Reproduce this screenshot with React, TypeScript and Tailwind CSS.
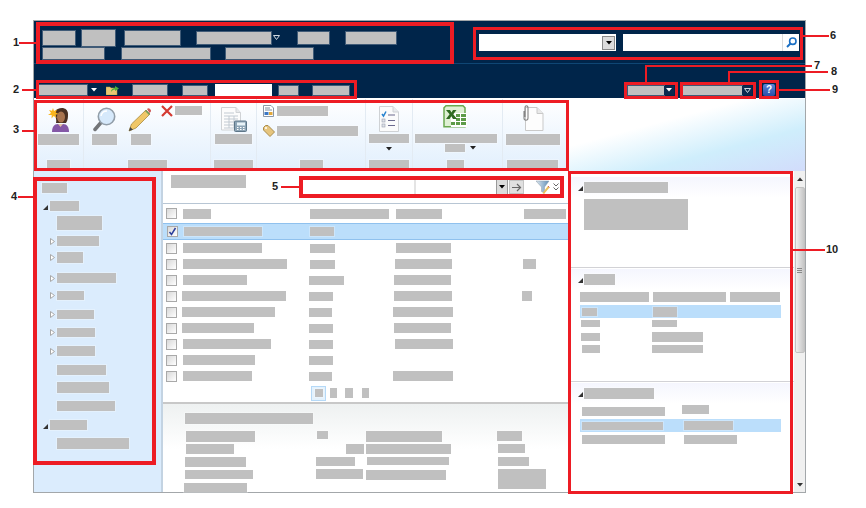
import type { ReactNode } from "react";

const Blk = ({ className = "" }: { className?: string }) => (
  <div className={`shrink-0 bg-[#c0c0c0] shadow-[0_0_0_1px_rgba(255,255,255,0.25)] ${className}`} />
);

const Caret = ({ className = "" }: { className?: string }) => (
  <svg width="6" height="4" viewBox="0 0 6 4" className={`shrink-0 ${className}`}>
    <path d="M0 0h6L3 3.5z" fill="currentColor" />
  </svg>
);

const HollowCaret = ({ className = "" }: { className?: string }) => (
  <svg width="7" height="5" viewBox="0 0 7 5" className={`shrink-0 ${className}`}>
    <path d="M.5.500h6L3.500 4.500z" fill="none" stroke="currentColor" />
  </svg>
);

const Expanded = ({ className = "" }: { className?: string }) => (
  <svg width="5" height="5" viewBox="0 0 5 5" className={`shrink-0 ${className}`}>
    <path d="M5 0v5H0z" fill="#333" />
  </svg>
);

const Collapsed = () => (
  <svg width="5" height="7" viewBox="0 0 5 7" className="shrink-0">
    <path d="M.5.500l4 3-4 3z" fill="#fff" stroke="#a8a8a8" />
  </svg>
);

const Check = ({ on = false }: { on?: boolean }) => (
  <div className="flex h-[11px] w-[11px] shrink-0 items-center justify-center border border-[#a9a9a9] bg-gradient-to-br from-[#d8d8d8] to-white">
    {on && (
      <svg width="9" height="9" viewBox="0 0 9 9">
        <path d="M1.500 5l2 2.500L7.500 1" fill="none" stroke="#2a3f9d" strokeWidth="1.500" />
      </svg>
    )}
  </div>
);

function UserIcon() {
  return (
    <svg width="24" height="25" viewBox="0 0 24 25">
      <path d="M5 25c0-5 2-8 6-8h5c4 0 6 3 6 8z" fill="#8458a6" />
      <path d="M11 17l2.500 3 2.500-3z" fill="#e3c3a6" />
      <path d="M8 5c1-3 4-4 7-4s6 2 6 6c0 3 0 6-2 9H9c1-3-1-7-1-11z" fill="#4a3122" />
      <ellipse cx="14" cy="10" rx="4" ry="5.500" fill="#a9744e" />
      <path d="M6 1l1 3 3-1.500L8.700 5.500 11.500 7 8.500 7.800 9.500 11 6.700 9 4.500 11.500 4.700 8 1 8l3-2L2 3l3 .7z" fill="#f9b51e" />
    </svg>
  );
}

function MagnifierIcon() {
  return (
    <svg width="23" height="25" viewBox="0 0 23 25">
      <path d="M8 15.500L2 22.500" stroke="#737578" strokeWidth="3.500" strokeLinecap="round" />
      <circle cx="13.500" cy="9.500" r="8.200" fill="#d6e9fb" stroke="#929ea9" strokeWidth="1.600" />
      <path d="M8 9c.5-3 3-5 6-5" stroke="#fff" strokeWidth="1.500" fill="none" />
    </svg>
  );
}

function PencilIcon() {
  return (
    <svg width="25" height="25" viewBox="0 0 25 25">
      <path d="M1 24l2.500-7L18 3l4 4L8 21z" fill="#f0c768" stroke="#a88a3e" strokeWidth=".8" />
      <path d="M1 24l1.200-4 2.800 2.800z" fill="#444" />
      <path d="M19 2c1-1 2-1 3 0s1.500 2 .5 3l-1 1z" fill="#cf5b58" />
      <path d="M17.500 3.500l4 4" stroke="#6e9e5e" strokeWidth="1.500" />
    </svg>
  );
}

function CrossIcon() {
  return (
    <svg width="12" height="12" viewBox="0 0 12 12">
      <path d="M1 1l10 10M11 1L1 11" stroke="#d43a32" strokeWidth="2.200" />
    </svg>
  );
}

function PhoneDocIcon() {
  return (
    <svg width="26" height="25" viewBox="0 0 26 25">
      <path d="M.5.500H15l4.500 5V23H.5z" fill="#fcfcfc" stroke="#d0d3d6" />
      <path d="M15 .5v5h4.500" fill="#e8eaec" stroke="#d0d3d6" />
      <path d="M3 6h10M3 9h14M3 12h14M3 15h14M3 18h14M3 21h14M8 9v12M13 9v12" stroke="#c2cad2" />
      <rect x="13.500" y="14" width="12" height="10.500" rx="1" fill="#8ea5b6" stroke="#5d7688" />
      <rect x="16" y="15.500" width="8" height="3" fill="#e8f3f8" />
      <path d="M16 20.500h1.500M19 20.500h1.500M22 20.500h1.500M16 22.500h1.500M19 22.500h1.500M22 22.500h1.500" stroke="#fff" />
    </svg>
  );
}

function SmallDocIcon() {
  return (
    <svg width="11" height="12" viewBox="0 0 11 12">
      <path d="M.5.500H8L10.500 3v8.500H.5z" fill="#fff" stroke="#8b97a5" />
      <path d="M2 3h5M2 5h7" stroke="#7e8ea0" />
      <rect x="1.500" y="7" width="4" height="3" fill="#3a76c4" />
      <rect x="6" y="7" width="3.500" height="3" fill="#e2a83a" />
    </svg>
  );
}

function TagIcon() {
  return (
    <svg width="12" height="12" viewBox="0 0 12 12">
      <path d="M.5 2.500L2.500.5h2.500l6.500 6.500L7 11.500.5 5z" fill="#e6c57e" stroke="#a98c4c" />
      <circle cx="3" cy="3" r="1" fill="#fff" />
    </svg>
  );
}

function ChecklistIcon() {
  return (
    <svg width="20" height="26" viewBox="0 0 20 26">
      <path d="M.5.500H14l5.500 5.500v19.500H.5z" fill="#fbfbfb" stroke="#cfd2d5" />
      <path d="M14 .5V6h5.500" fill="#e9ebed" stroke="#cfd2d5" />
      <path d="M3 8l1.500 2L7 5.500" fill="none" stroke="#2682cf" strokeWidth="1.500" />
      <rect x="3" y="13" width="3" height="3" fill="#dfe3e8" stroke="#9a9fb0" strokeWidth=".6" />
      <rect x="3" y="18" width="3" height="3" fill="#dfe3e8" stroke="#9a9fb0" strokeWidth=".6" />
      <path d="M9 9h7M9 14.500h7M9 19.500h7" stroke="#6c6a8e" strokeWidth="1.200" />
    </svg>
  );
}

function ExcelIcon() {
  return (
    <svg width="25" height="25" viewBox="0 0 25 25">
      <path d="M3 .8h17l2 2v19H1V2.800z" fill="#dff0d4" stroke="#6aa84f" strokeWidth="1.500" />
      <rect x="8" y="8" width="16" height="14" fill="#fff" />
      <path d="M13 9h4v3h-4zM18 9h5v3h-5zM13 13h4v3h-4zM18 13h5v3h-5zM8 17h4v3H8zM13 17h4v3h-4zM18 17h5v3h-5z" fill="#5d9b48" />
      <path d="M3 5h4l1.500 2.500L10 5h3.500l-3.200 4.300L14 14h-4l-1.700-2.700L6.500 14H3l3.600-4.700z" fill="#2f6b21" />
    </svg>
  );
}

function AttachDocIcon() {
  return (
    <svg width="22" height="26" viewBox="0 0 22 26">
      <path d="M3.500 2.500H15l6 6v17H3.500z" fill="#fdfdfd" stroke="#c9c9c9" />
      <path d="M15 2.500v6h6" fill="#e9e9e9" stroke="#c9c9c9" />
      <path d="M2 6v7c0 3 4 3 4 0V3C6 0 3 0 3 3v9" fill="none" stroke="#848484" strokeWidth="1.100" />
    </svg>
  );
}

function FolderIcon() {
  return (
    <svg width="13" height="10" viewBox="0 0 13 10" className="shrink-0">
      <path d="M0 2h4l1 1h6v7H0z" fill="#e9c872" stroke="#b5943e" strokeWidth=".5" />
      <path d="M5 7c0-3 2-4 4-4V1l4 2.500L9 6V4.500C7 4.500 6 5.500 5 7z" fill="#4aae3a" />
    </svg>
  );
}

function SearchIcon() {
  return (
    <svg width="11" height="11" viewBox="0 0 11 11">
      <circle cx="6.800" cy="4.200" r="3.200" fill="none" stroke="#1a6fc4" strokeWidth="1.600" />
      <path d="M4.500 6.500L1 10" stroke="#1a6fc4" strokeWidth="2" />
    </svg>
  );
}

function FilterIcon() {
  return (
    <svg width="14" height="14" viewBox="0 0 14 14">
      <defs>
        <linearGradient id="funnel" x1="0" x2="1" y1="0" y2="0">
          <stop offset="0" stopColor="#dfe8f0" />
          <stop offset="1" stopColor="#5f8fb8" />
        </linearGradient>
      </defs>
      <path d="M0 1h13L8.500 7v6l-3-1.500V7z" fill="url(#funnel)" stroke="#8a9aa8" strokeWidth=".5" />
      <path d="M6.500 13l5.500-7 1.500 1.500L8 14z" fill="#eac25c" />
      <path d="M12 6l1.500 1.500" stroke="#d0605a" />
    </svg>
  );
}

function ArrowIcon() {
  return (
    <svg width="10" height="9" viewBox="0 0 10 9">
      <path d="M0 4.500h8M5 1l3.500 3.500L5 8" fill="none" stroke="#666" strokeWidth="1.200" />
    </svg>
  );
}

function DoubleChevron() {
  return (
    <svg width="6" height="8" viewBox="0 0 6 8">
      <path d="M.5.500L3 3 5.500.5M.5 4.500L3 7l2.500-2.500" fill="none" stroke="#666" />
    </svg>
  );
}

function Group({ className, foot, children }: { className: string; foot: string; children: ReactNode }) {
  return (
    <div className={`flex h-full shrink-0 flex-col border-r border-[#e3ebf3] ${className}`}>
      <div className="h-[61px]">{children}</div>
      <Blk className={`mx-auto h-[8px] ${foot}`} />
    </div>
  );
}

const treeRows = [
  { kids: false, w: "w-[45px]", h: "h-[14px]", mt: "mt-[5px]" },
  { kids: true, w: "w-[42px]", h: "h-[10px]", mt: "mt-[6px]" },
  { kids: true, w: "w-[26px]", h: "h-[11px]", mt: "mt-[6px]" },
  { kids: true, w: "w-[59px]", h: "h-[10px]", mt: "mt-[10px]" },
  { kids: true, w: "w-[27px]", h: "h-[9px]", mt: "mt-[8px]" },
  { kids: true, w: "w-[37px]", h: "h-[9px]", mt: "mt-[10px]" },
  { kids: true, w: "w-[38px]", h: "h-[9px]", mt: "mt-[9px]" },
  { kids: true, w: "w-[38px]", h: "h-[10px]", mt: "mt-[9px]" },
  { kids: false, w: "w-[49px]", h: "h-[10px]", mt: "mt-[9px]" },
  { kids: false, w: "w-[52px]", h: "h-[11px]", mt: "mt-[7px]" },
  { kids: false, w: "w-[58px]", h: "h-[10px]", mt: "mt-[8px]" },
];

const gridRows = [
  { c1: "w-[79px]", c2: "w-[25px]", c3: "w-[55px] ml-[2px]", c4: "" },
  { c1: "w-[104px]", c2: "w-[25px]", c3: "w-[57px] ml-[1px]", c4: "w-[13px]" },
  { c1: "w-[64px]", c2: "w-[35px] -ml-[1px]", c3: "w-[57px]", c4: "" },
  { c1: "w-[104px] -ml-[1px]", c2: "w-[24px] -ml-[1px]", c3: "w-[58px]", c4: "w-[10px] -ml-[1px]" },
  { c1: "w-[93px] -ml-[1px]", c2: "w-[23px] -ml-[1px]", c3: "w-[60px] -ml-[1px]", c4: "" },
  { c1: "w-[72px] -ml-[1px]", c2: "w-[24px] -ml-[1px]", c3: "w-[57px]", c4: "" },
  { c1: "w-[88px]", c2: "w-[24px] -ml-[1px]", c3: "w-[58px] ml-[1px]", c4: "" },
  { c1: "w-[72px]", c2: "w-[24px] -ml-[1px]", c3: "", c4: "" },
  { c1: "w-[69px]", c2: "w-[23px] -ml-[1px]", c3: "w-[60px] -ml-[1px]", c4: "" },
];

function SectionHead({ w }: { w: string }) {
  return (
    <div className="flex h-[21px] items-center gap-[1px] bg-gradient-to-b from-[#f5f6fe] to-white pl-[9px]">
      <Expanded className="mt-[1px]" />
      <Blk className={`h-[11px] ${w}`} />
    </div>
  );
}

export default function App() {
  return (
    <div className="relative h-[508px] w-[866px] overflow-hidden bg-white pl-[33px] pt-[20px] font-['Liberation_Sans',sans-serif]">
      <div className="flex h-[473px] w-[773px] flex-col border border-[#a3a7aa]">
        {/* top bar */}
        <div className="h-[78px] shrink-0 border-b border-white bg-[#00254a]">
          <div className="flex h-[43px] justify-between border-b border-[#0f4674]">
            <div className="pl-[9px]">
              <div className="flex h-[27px] items-center pt-[6px]">
                <Blk className="h-[14px] w-[32px]" />
                <Blk className="ml-[7px] h-[16px] w-[33px]" />
                <Blk className="ml-[10px] h-[14px] w-[55px]" />
                <Blk className="ml-[17px] h-[12px] w-[74px]" />
                <HollowCaret className="ml-[2px] text-[#cfd8e0]" />
                <Blk className="ml-[18px] h-[12px] w-[31px]" />
                <Blk className="ml-[17px] h-[12px] w-[50px]" />
              </div>
              <div className="flex items-center">
                <Blk className="h-[11px] w-[61px]" />
                <Blk className="ml-[18px] h-[11px] w-[88px]" />
                <Blk className="ml-[16px] h-[11px] w-[87px]" />
              </div>
            </div>
            <div className="flex items-start pr-[6px] pt-[13px]">
              <div className="flex h-[17px] w-[137px] items-center justify-end bg-white pr-[1px]">
                <div className="flex h-[14px] w-[13px] items-center justify-center border border-[#8a8a8a] bg-[#dcdcdc] text-black">
                  <Caret />
                </div>
              </div>
              <div className="ml-[7px] flex h-[17px] w-[176px] items-center justify-end bg-white">
                <div className="flex h-full w-[17px] items-center justify-center border-l border-[#dcdcdc]">
                  <SearchIcon />
                </div>
              </div>
            </div>
          </div>
          <div className="relative flex h-[34px] items-start justify-between pt-[20px] text-white">
            <div className="flex items-center pl-[5px]">
              <Blk className="h-[10px] w-[48px]" />
              <Caret className="ml-[4px]" />
              <div className="ml-[9px]">
                <FolderIcon />
              </div>
              <Blk className="ml-[14px] h-[10px] w-[34px]" />
              <Blk className="ml-[16px] h-[9px] w-[24px]" />
              <div className="ml-[8px] h-[12px] w-[57px] bg-white" />
              <Blk className="ml-[7px] h-[9px] w-[19px]" />
              <Blk className="ml-[15px] h-[9px] w-[36px]" />
            </div>
            <div className="flex items-center pr-[30px]">
              <Blk className="h-[9px] w-[36px]" />
              <div className="flex h-[9px] w-[10px] items-center justify-center bg-[#0c2a4f]">
                <Caret />
              </div>
              <Blk className="ml-[9px] h-[9px] w-[59px]" />
              <div className="flex h-[9px] w-[10px] items-center justify-center bg-[#0c2a4f]">
                <HollowCaret className="text-[#cfd8e0]" />
              </div>
              <div className="ml-[11px] flex h-[12px] w-[12px] items-center justify-center rounded-[2px] bg-gradient-to-b from-[#5d83d8] to-[#2a4fa8] text-[10px] font-bold leading-none text-white">
                ?
              </div>
            </div>
          </div>
        </div>

        {/* ribbon */}
        <div className="flex h-[72px] shrink-0">
          <div className="flex h-full w-[535px] shrink-0 bg-gradient-to-b from-white to-[#e1effd]">
            <Group className="w-[50px]" foot="w-[23px]">
              <div className="flex flex-col items-center pt-[8px]">
                <UserIcon />
                <Blk className="mt-[2px] h-[11px] w-[41px]" />
              </div>
            </Group>
            <Group className="w-[127px]" foot="w-[39px]">
              <div className="flex pl-[8px]">
                <div className="flex w-[25px] flex-col items-center pt-[8px]">
                  <MagnifierIcon />
                  <Blk className="mt-[2px] h-[11px] w-[25px]" />
                </div>
                <div className="ml-[11px] flex w-[25px] flex-col items-center pt-[8px]">
                  <PencilIcon />
                  <Blk className="mt-[2px] h-[11px] w-[20px]" />
                </div>
                <div className="ml-[8px] flex items-start gap-[2px] pt-[6px]">
                  <CrossIcon />
                  <Blk className="mt-[1px] h-[9px] w-[27px]" />
                </div>
              </div>
            </Group>
            <Group className="w-[46px]" foot="w-[39px]">
              <div className="flex flex-col items-center pt-[8px]">
                <PhoneDocIcon />
                <Blk className="mt-[2px] h-[10px] w-[37px]" />
              </div>
            </Group>
            <Group className="w-[109px]" foot="w-[23px]">
              <div className="flex flex-col gap-[8px] pl-[6px] pt-[6px]">
                <div className="flex items-center gap-[3px]">
                  <SmallDocIcon />
                  <Blk className="h-[10px] w-[51px]" />
                </div>
                <div className="flex items-center gap-[2px]">
                  <TagIcon />
                  <Blk className="h-[10px] w-[81px]" />
                </div>
              </div>
            </Group>
            <Group className="w-[47px]" foot="w-[40px]">
              <div className="flex flex-col items-center pt-[7px]">
                <ChecklistIcon />
                <Blk className="mt-[2px] h-[9px] w-[40px]" />
                <Caret className="mt-[4px] text-[#222]" />
              </div>
            </Group>
            <Group className="w-[90px] pr-[4px]" foot="w-[17px]">
              <div className="flex flex-col items-center pt-[6px]">
                <ExcelIcon />
                <Blk className="mt-[4px] h-[9px] w-[82px]" />
                <div className="mt-[1px] flex items-center gap-[5px] pl-[9px]">
                  <Blk className="h-[8px] w-[20px]" />
                  <Caret className="text-[#222]" />
                </div>
              </div>
            </Group>
            <Group className="w-[62px] border-r-0 pr-[3px]" foot="w-[51px]">
              <div className="flex flex-col items-center pt-[6px]">
                <AttachDocIcon />
                <Blk className="mt-[3px] h-[11px] w-[54px]" />
              </div>
            </Group>
          </div>
          <div className="flex-1 bg-[linear-gradient(165deg,#ffffff_35%,#cfeefc_68%,#d2dcfb_100%)]" />
        </div>

        {/* body */}
        <div className="flex min-h-0 flex-1">
          {/* tree */}
          <div className="w-[129px] shrink-0 border-r-2 border-[#c3d3e2] bg-[#dbecfd] pl-[8px] pt-[12px]">
            <Blk className="h-[10px] w-[25px]" />
            <div className="mt-[8px] flex items-center gap-[2px] pl-[1px]">
              <Expanded className="mt-[2px]" />
              <Blk className="h-[10px] w-[29px]" />
            </div>
            {treeRows.map((row, i) => (
              <div key={i} className={`flex items-center pl-[8px] ${row.mt}`}>
                <div className="w-[7px] shrink-0">{row.kids && <Collapsed />}</div>
                <Blk className={`${row.w} ${row.h}`} />
              </div>
            ))}
            <div className="mt-[9px] flex items-center gap-[2px] pl-[1px]">
              <Expanded className="mt-[2px]" />
              <Blk className="h-[10px] w-[37px]" />
            </div>
            <Blk className="ml-[15px] mt-[8px] h-[11px] w-[72px]" />
          </div>

          {/* list */}
          <div className="flex w-[406px] shrink-0 flex-col">
            <div className="flex h-[33px] shrink-0 items-start justify-between border-b border-[#b8c6d4] pl-[8px] pr-[10px]">
              <Blk className="mt-[4px] h-[13px] w-[75px]" />
              <div className="mt-[9px] flex h-[14px] items-center">
                <div className="h-full w-[110px] border border-white bg-white" />
                <div className="h-full w-[82px] border-l-2 border-[#e4e4e4] bg-white" />
                <div className="flex h-full w-[12px] items-center justify-center border-x border-[#9a9a9a] bg-[#dcdcdc] text-black">
                  <Caret />
                </div>
                <div className="ml-[1px] flex h-full w-[15px] items-center justify-center border border-[#c4c4c4] bg-[#e0e0e0]">
                  <ArrowIcon />
                </div>
                <div className="ml-[12px]">
                  <FilterIcon />
                </div>
                <div className="ml-[3px]">
                  <DoubleChevron />
                </div>
              </div>
            </div>
            <div className="grid h-[19px] shrink-0 grid-cols-[20px_127px_84px_129px_1fr] items-center">
              <div className="pl-[3px]">
                <Check />
              </div>
              <Blk className="h-[10px] w-[28px]" />
              <Blk className="h-[10px] w-[79px]" />
              <Blk className="ml-[2px] h-[10px] w-[46px]" />
              <Blk className="ml-[1px] h-[10px] w-[42px]" />
            </div>
            <div className="grid h-[17px] shrink-0 grid-cols-[20px_127px_1fr] items-center border-y border-[#8fc1ee] bg-[#bbdefb]">
              <div className="pl-[4px]">
                <Check on />
              </div>
              <Blk className="ml-[1px] h-[9px] w-[78px]" />
              <Blk className="h-[9px] w-[24px]" />
            </div>
            {gridRows.map((row, i) => (
              <div key={i} className="grid h-[16px] shrink-0 grid-cols-[20px_127px_84px_129px_1fr] items-center">
                <div className="pl-[3px]">
                  <Check />
                </div>
                <Blk className={`h-[10px] ${row.c1}`} />
                <Blk className={`h-[9px] ${row.c2}`} />
                <div>{row.c3 && <Blk className={`h-[10px] ${row.c3}`} />}</div>
                <div>{row.c4 && <Blk className={`h-[10px] ${row.c4}`} />}</div>
              </div>
            ))}
            <div className="flex h-[18px] shrink-0 items-center pl-[148px]">
              <div className="flex h-[15px] w-[15px] items-center justify-center border border-[#b5d9f7] bg-[#e4f2fd]">
                <Blk className="h-[8px] w-[8px]" />
              </div>
              <Blk className="ml-[4px] h-[10px] w-[7px]" />
              <Blk className="ml-[8px] h-[10px] w-[8px]" />
              <Blk className="ml-[9px] h-[10px] w-[7px]" />
            </div>
            <div className="min-h-0 flex-1 border-t-2 border-[#c8c8c8] bg-[linear-gradient(#eef1f1,#ffffff_45px)] pl-[22px] pt-[9px]">
              <Blk className="h-[11px] w-[128px]" />
              <div className="mt-[7px] grid auto-rows-[13px] grid-cols-[131px_50px_131px_1fr] items-start">
                <Blk className="ml-[1px] h-[11px] w-[69px]" />
                <Blk className="ml-[1px] h-[8px] w-[11px]" />
                <Blk className="h-[11px] w-[76px]" />
                <Blk className="h-[10px] w-[25px]" />
                <Blk className="ml-[1px] h-[10px] w-[48px]" />
                <Blk className="ml-[30px] h-[10px] w-[18px]" />
                <Blk className="h-[10px] w-[85px]" />
                <Blk className="ml-[1px] h-[9px] w-[27px]" />
                <Blk className="h-[10px] w-[61px]" />
                <Blk className="h-[9px] w-[39px]" />
                <Blk className="ml-[1px] h-[8px] w-[82px]" />
                <Blk className="ml-[1px] h-[9px] w-[31px]" />
                <Blk className="h-[9px] w-[68px]" />
                <Blk className="-mt-[1px] h-[10px] w-[47px]" />
                <Blk className="h-[10px] w-[80px]" />
                <Blk className="-mt-[1px] ml-[1px] row-span-2 h-[20px] w-[48px]" />
                <Blk className="-ml-[1px] h-[9px] w-[63px]" />
              </div>
            </div>
          </div>

          {/* details */}
          <div className="flex min-w-0 flex-1">
            <div className="flex min-w-0 flex-1 flex-col">
              <div className="h-[97px] shrink-0 border-b border-[#d2d2d6] pt-[6px]">
                <SectionHead w="w-[84px]" />
                <Blk className="ml-[15px] mt-[1px] h-[31px] w-[104px]" />
              </div>
              <div className="h-[114px] shrink-0 border-b border-[#d2d2d6] pt-[1px]">
                <SectionHead w="w-[31px]" />
                <div className="grid grid-cols-[73px_77px_1fr] pl-[11px] pt-[2px]">
                  <Blk className="h-[10px] w-[69px]" />
                  <Blk className="h-[10px] w-[73px]" />
                  <Blk className="h-[10px] w-[50px]" />
                </div>
                <div className="ml-[11px] mt-[3px] grid h-[13px] w-[201px] grid-cols-[71px_1fr] items-center bg-[#bbdefb] pl-[2px]">
                  <Blk className="h-[8px] w-[15px]" />
                  <Blk className="h-[10px] w-[24px]" />
                </div>
                <div className="mt-[2px] grid h-[7px] grid-cols-[71px_1fr] pl-[12px]">
                  <Blk className="h-[7px] w-[19px]" />
                  <Blk className="h-[7px] w-[25px]" />
                </div>
                <div className="mt-[5px] grid grid-cols-[71px_1fr] items-center pl-[12px]">
                  <Blk className="h-[8px] w-[19px]" />
                  <Blk className="h-[10px] w-[51px]" />
                </div>
                <div className="mt-[3px] grid grid-cols-[71px_1fr] items-center pl-[13px]">
                  <Blk className="h-[8px] w-[18px]" />
                  <Blk className="-ml-[1px] h-[8px] w-[51px]" />
                </div>
              </div>
              <div className="min-h-0 flex-1 pt-[1px]">
                <SectionHead w="w-[70px]" />
                <div className="grid grid-cols-[100px_1fr] items-start pl-[13px] pt-[1px]">
                  <Blk className="mt-[2px] h-[9px] w-[83px]" />
                  <Blk className="h-[9px] w-[27px]" />
                </div>
                <div className="ml-[11px] mt-[3px] grid h-[13px] w-[201px] grid-cols-[102px_1fr] items-center bg-[#bbdefb] pl-[2px]">
                  <Blk className="h-[8px] w-[81px]" />
                  <Blk className="h-[9px] w-[49px]" />
                </div>
                <div className="mt-[3px] grid grid-cols-[102px_1fr] pl-[13px]">
                  <Blk className="h-[9px] w-[83px]" />
                  <Blk className="h-[9px] w-[53px]" />
                </div>
              </div>
            </div>
            {/* scrollbar */}
            <div className="flex w-[11px] shrink-0 flex-col items-center bg-[#f0f0f0] pt-[6px] text-[#333]">
              <Caret className="rotate-180" />
              <div className="mt-[6px] flex h-[166px] w-[10px] items-center justify-center rounded-[2px] border border-[#c2c2c2] bg-gradient-to-r from-[#f0f0f0] to-[#c6c6c6]">
                <div className="h-[5px] w-[5px] border-y border-[#888] bg-[linear-gradient(#888,#888)] bg-[length:100%_1px] bg-center bg-no-repeat" />
              </div>
              <Caret className="mt-auto mb-[5px]" />
            </div>
          </div>
        </div>
      </div>

      {/* callouts */}
      <div className="absolute left-[36px] top-[22px] h-[42px] w-[418px] border-[4px] border-[#ed1c24]" />
      <div className="absolute left-[36px] top-[80px] h-[19px] w-[321px] border-[3px] border-[#ed1c24]" />
      <div className="absolute left-[34px] top-[100px] h-[71px] w-[535px] border-[3px] border-[#ed1c24]" />
      <div className="absolute left-[33px] top-[177px] h-[288px] w-[123px] border-[4px] border-[#ed1c24]" />
      <div className="absolute left-[299px] top-[176px] h-[22px] w-[265px] border-[4px] border-[#ed1c24]" />
      <div className="absolute left-[473px] top-[27px] h-[33px] w-[330px] border-[3px] border-[#ed1c24]" />
      <div className="absolute left-[624px] top-[82px] h-[17px] w-[54px] border-[3px] border-[#ed1c24]" />
      <div className="absolute left-[680px] top-[82px] h-[17px] w-[76px] border-[3px] border-[#ed1c24]" />
      <div className="absolute left-[759px] top-[80px] h-[19px] w-[20px] border-[3px] border-[#ed1c24]" />
      <div className="absolute left-[568px] top-[171px] h-[323px] w-[225px] border-[3px] border-[#ed1c24]" />

      <div className="absolute left-[19px] top-[42px] h-[2px] w-[17px] bg-[#ed1c24]" />
      <div className="absolute left-[22px] top-[89px] h-[2px] w-[14px] bg-[#ed1c24]" />
      <div className="absolute left-[22px] top-[130px] h-[2px] w-[12px] bg-[#ed1c24]" />
      <div className="absolute left-[18px] top-[196px] h-[2px] w-[15px] bg-[#ed1c24]" />
      <div className="absolute left-[281px] top-[186px] h-[2px] w-[18px] bg-[#ed1c24]" />
      <div className="absolute left-[803px] top-[35px] h-[2px] w-[26px] bg-[#ed1c24]" />
      <div className="absolute left-[645px] top-[65px] h-[17px] w-[167px] border-l-2 border-t-2 border-[#ed1c24]" />
      <div className="absolute left-[728px] top-[71px] h-[11px] w-[100px] border-l-2 border-t-2 border-[#ed1c24]" />
      <div className="absolute left-[779px] top-[89px] h-[2px] w-[51px] bg-[#ed1c24]" />
      <div className="absolute left-[793px] top-[249px] h-[2px] w-[32px] bg-[#ed1c24]" />

      <span className="absolute left-[13px] top-[36px] text-[11px] font-bold leading-[13px] text-[#222]">1</span>
      <span className="absolute left-[13px] top-[83px] text-[11px] font-bold leading-[13px] text-[#222]">2</span>
      <span className="absolute left-[13px] top-[123px] text-[11px] font-bold leading-[13px] text-[#222]">3</span>
      <span className="absolute left-[11px] top-[190px] text-[11px] font-bold leading-[13px] text-[#222]">4</span>
      <span className="absolute left-[272px] top-[180px] text-[11px] font-bold leading-[13px] text-[#222]">5</span>
      <span className="absolute left-[830px] top-[29px] text-[11px] font-bold leading-[13px] text-[#222]">6</span>
      <span className="absolute left-[814px] top-[59px] text-[11px] font-bold leading-[13px] text-[#222]">7</span>
      <span className="absolute left-[831px] top-[65px] text-[11px] font-bold leading-[13px] text-[#222]">8</span>
      <span className="absolute left-[832px] top-[83px] text-[11px] font-bold leading-[13px] text-[#222]">9</span>
      <span className="absolute left-[826px] top-[243px] text-[11px] font-bold leading-[13px] text-[#222]">10</span>
    </div>
  );
}
